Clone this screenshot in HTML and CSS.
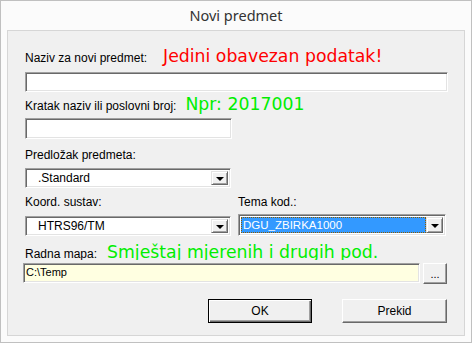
FILE: index.html
```html
<!DOCTYPE html>
<html lang="hr">
<head>
  <meta charset="UTF-8" />
  <title>Novi predmet</title>
  <link rel="stylesheet" href="styles.css">
</head>
<body>
  <div id="dialog">
    <div id="title">Novi predmet</div>

    <div id="panel">
      <div class="row row-naziv">
        <span class="lbl">Naziv za novi predmet:</span>
        <span class="hint red">Jedini obavezan podatak!</span>
      </div>
      <div class="field field-naziv"></div>

      <div class="row row-kratak">
        <span class="lbl">Kratak naziv ili poslovni broj:</span>
        <span class="hint green">Npr: 2017001</span>
      </div>
      <div class="field field-kratak"></div>

      <div class="lbl lbl-block">Predložak predmeta:</div>
      <div class="combo combo-predlozak">
        <span class="combo-text">.Standard</span>
        <span class="drop"></span>
      </div>

      <div class="pair">
        <div class="col col-koord">
          <div class="lbl">Koord. sustav:</div>
          <div class="combo combo-koord">
            <span class="combo-text">HTRS96/TM</span>
            <span class="drop"></span>
          </div>
        </div>
        <div class="col col-tema">
          <div class="lbl">Tema kod.:</div>
          <div class="combo combo-tema">
            <span class="combo-sel">DGU_ZBIRKA1000</span>
            <span class="drop"></span>
          </div>
        </div>
      </div>

      <div class="row row-mapa">
        <span class="lbl">Radna mapa:</span>
        <span class="hint green">Smještaj mjerenih i drugih pod.</span>
      </div>
      <div class="path-row">
        <div class="path">C:\Temp</div>
        <button class="btn btn-dots">...</button>
      </div>

      <div class="actions">
        <button class="btn btn-default">OK</button>
        <button class="btn btn-cancel">Prekid</button>
      </div>
    </div>
  </div>
</body>
</html>
```

FILE: styles.css
```css
html, body {
  margin: 0;
  padding: 0;
  background: #fbfbfb;
  font-family: "Liberation Sans", Arial, sans-serif;
}

#dialog {
  width: 472px;
  height: 343px;
  box-sizing: border-box;
  border: 1px solid #c0c0c0;
  background: #fbfbfb;
  display: flex;
  flex-direction: column;
}

#title {
  height: 29px;
  line-height: 29px;
  text-align: center;
  font-family: "Noto Sans", "Open Sans", sans-serif;
  font-size: 14.5px;
  color: #333;
}

#panel {
  flex: 1;
  margin: 0 6px 6px 6px;
  border: 1px solid #d6d6d6;
  background: #f0f0f0;
  padding: 0 17px;
  display: flex;
  flex-direction: column;
}

.lbl {
  font-size: 12px;
  line-height: 14px;
  color: #000;
  white-space: nowrap;
}

.row {
  display: flex;
  align-items: baseline;
  height: 20px;
}

.hint {
  font-family: "DejaVu Sans", Verdana, sans-serif;
  font-size: 17.3px;
  line-height: 20px;
  white-space: nowrap;
}

.red { color: #ff0000; }
.green { color: #00ee00; }

.row-naziv { margin-top: 15px; }
.row-naziv .hint { margin-left: 16px; }

.row-kratak { margin-top: 2px; }
.row-kratak .hint { margin-left: 9px; }

.row-mapa {
  margin-top: 6px;
  height: 18px;
  overflow: hidden;
}
.row-mapa .hint { margin-left: 10px; }

/* sunken 3d fields */
.field, .combo, .path {
  box-sizing: border-box;
  background: #fff;
  border: 1px solid;
  border-color: #a0a0a0 #fff #fff #a0a0a0;
  box-shadow: inset 1px 1px #696969, inset -1px -1px #e3e3e3;
}

.field-naziv {
  margin-top: 6px;
  width: 423px;
  height: 20px;
}

.field-kratak {
  margin-top: 4px;
  width: 207px;
  height: 21px;
}

.lbl-block { margin-top: 9px; }

.combo {
  display: flex;
  align-items: center;
  height: 20px;
  padding: 2px;
  font-size: 12px;
  color: #000;
}

.combo-text {
  flex: 1;
  padding-left: 10px;
}

.drop {
  width: 17px;
  height: 100%;
  box-sizing: border-box;
  background: #f0f0f0;
  border: 1px solid;
  border-color: #e3e3e3 #696969 #696969 #e3e3e3;
  box-shadow: inset 1px 1px #fff, inset -1px -1px #a0a0a0;
  display: flex;
  align-items: center;
  justify-content: center;
}

.drop::after {
  content: "";
  border-left: 4px solid transparent;
  border-right: 4px solid transparent;
  border-top: 4px solid #000;
  margin-top: 1px;
}

.combo-predlozak {
  margin-top: 6px;
  width: 206px;
}

.pair {
  display: flex;
  gap: 7px;
  margin-top: 7px;
}

.col-koord { width: 206px; }
.col-tema { width: 208px; }

.combo-koord { margin-top: 7px; }

.combo-tema {
  margin-top: 5px;
  height: 22px;
}

.combo-sel {
  flex: 1;
  align-self: stretch;
  background: #3399ff;
  color: #fff;
  font-size: 11.5px;
  padding-left: 2px;
  display: flex;
  align-items: center;
  outline: 1px dotted #8a5a00;
  outline-offset: -1px;
}

.path-row {
  display: flex;
  gap: 3px;
  margin-top: 3px;
  margin-left: -2px;
}

.path {
  width: 397px;
  height: 20px;
  background: #ffffe1;
  font-size: 11px;
  line-height: 16px;
  padding-left: 2px;
}

/* raised 3d buttons */
.btn {
  box-sizing: border-box;
  background: #f0f0f0;
  border: 1px solid;
  border-color: #fff #696969 #696969 #fff;
  box-shadow: inset -1px -1px #a0a0a0;
  font-family: "Liberation Sans", Arial, sans-serif;
  font-size: 12px;
  color: #000;
  padding: 0;
}

.btn-dots {
  width: 24px;
  height: 21px;
  font-size: 11px;
  line-height: 14px;
}

.actions {
  display: flex;
  justify-content: flex-end;
  gap: 30px;
  margin-top: 15px;
}

.btn-default {
  width: 104px;
  height: 24px;
  border-color: #000;
  box-shadow: inset 1px 1px #fff, inset -1px -1px #696969, inset -2px -2px #a0a0a0;
}

.btn-cancel {
  width: 105px;
  height: 24px;
}
```
